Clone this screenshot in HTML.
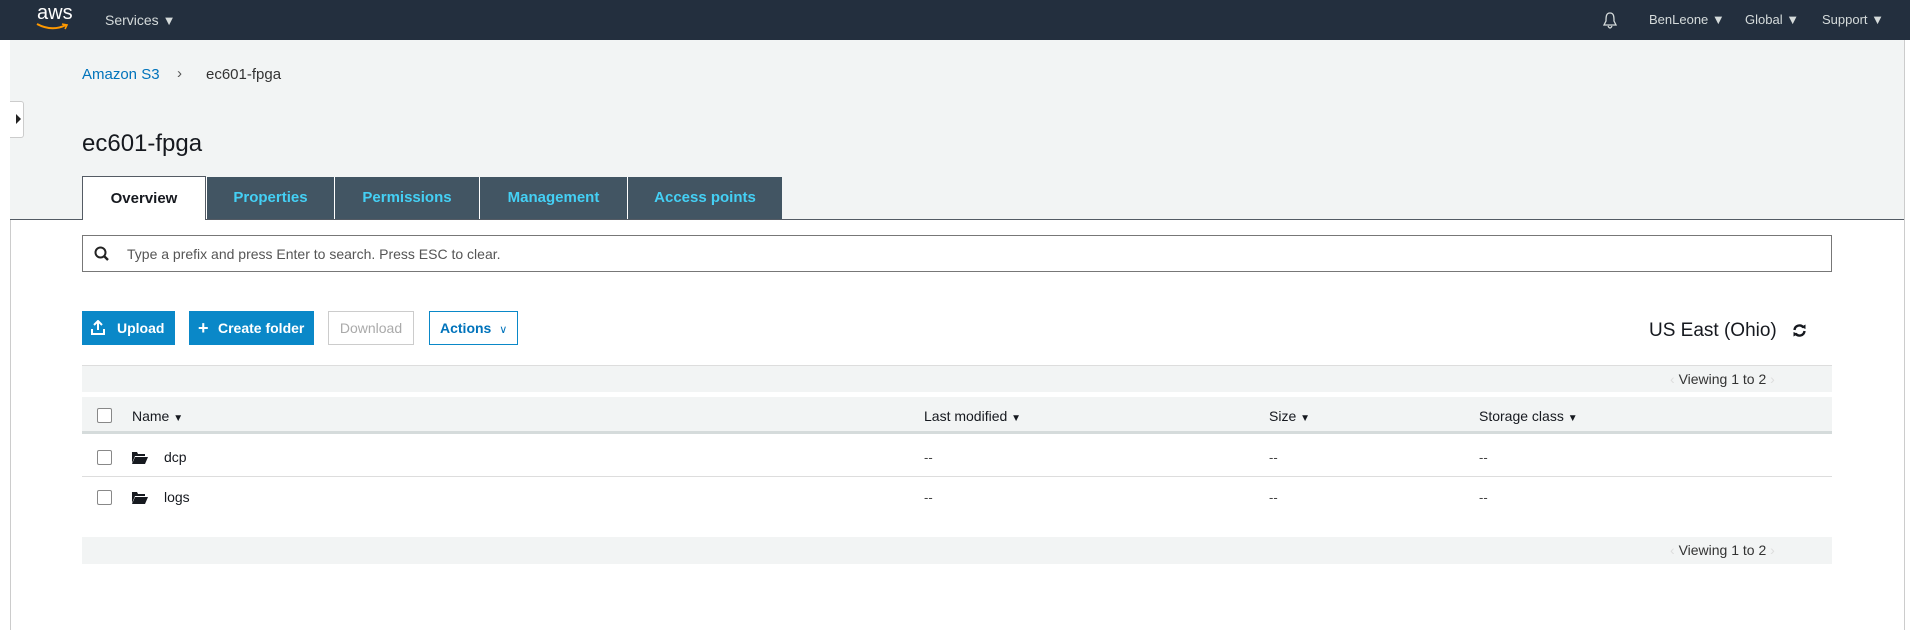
<!DOCTYPE html>
<html><head><style>
*{box-sizing:border-box;margin:0;padding:0}
body{width:1910px;height:630px;overflow:hidden;background:#fff;font-family:"Liberation Sans",Arial,sans-serif;color:#16191f;position:relative}
.a{position:absolute}
.nav{left:0;top:0;width:1910px;height:40px;background:#232f3e;color:#d5dbdb;font-size:14px}
.nav span{position:absolute;top:12px}
.gray{left:10px;top:40px;width:1894px;height:179px;background:#f2f4f4}
.tab{top:177px;height:42px;background:#425563;color:#44d0f5;font-weight:bold;font-size:15px;text-align:center;line-height:42px;border-left:1px solid #fff}
.btn{top:311px;height:34px;font-size:14px;font-weight:bold;line-height:34px}
.hd{font-size:14px;top:408px}
.cb{width:15px;height:15px;border:1px solid #888;background:#fff;border-radius:2px}
.dash{font-size:13px;color:#444}
.tri{font-size:10px}
</style></head><body>
<div class="a nav">
 <span style="left:37px;top:2px;font-size:20px;color:#fff;font-weight:normal">aws</span>
 <svg class="a" style="left:36px;top:23px" width="34" height="8"><path d="M1 1 Q16 9 30 2" stroke="#f90" stroke-width="2" fill="none"/><path d="M26 1 L31 2 L29 6" stroke="#f90" stroke-width="1.6" fill="none"/></svg>
 <span style="left:105px">Services <span style="position:static;font-size:13px">▼</span></span>
 <svg class="a" style="left:1602px;top:11px" width="16" height="19"><path d="M8 2 C4 2 4 6 4 10 L2 14 L14 14 L12 10 C12 6 12 2 8 2Z M6 15 Q8 19 10 15" stroke="#d5dbdb" stroke-width="1.3" fill="none"/></svg>
 <span style="left:1649px;font-size:13px">BenLeone ▼</span>
 <span style="left:1745px;font-size:13px">Global ▼</span>
 <span style="left:1822px;font-size:13px">Support ▼</span>
</div>
<div class="a" style="left:10px;top:40px;width:1px;height:590px;background:#ccc"></div>
<div class="a" style="left:1904px;top:40px;width:1px;height:590px;background:#ccc"></div>
<div class="a gray"></div>
<div class="a" style="left:10px;top:101px;width:14px;height:37px;background:#fff;border:1px solid #ccc;border-left:none;border-radius:0 3px 3px 0"></div>
<div class="a" style="left:16px;top:114px;width:0;height:0;border-left:5px solid #222;border-top:5px solid transparent;border-bottom:5px solid transparent"></div>
<div class="a" style="left:82px;top:66px;font-size:15px;color:#0073bb">Amazon S3</div>
<div class="a" style="left:177px;top:65px;font-size:15px;color:#555">›</div>
<div class="a" style="left:206px;top:66px;font-size:15px;color:#333">ec601-fpga</div>
<div class="a" style="left:82px;top:130px;font-size:24px;color:#16191f">ec601-fpga</div>
<div class="a" style="left:10px;top:219px;width:1894px;height:1px;background:#545b64"></div>
<div class="a" style="left:82px;top:176px;width:124px;height:44px;background:#fff;border:1px solid #545b64;border-bottom:none;font-size:15px;font-weight:bold;text-align:center;line-height:44px">Overview</div>
<div class="a tab" style="left:206px;width:128px">Properties</div>
<div class="a tab" style="left:334px;width:145px">Permissions</div>
<div class="a tab" style="left:479px;width:148px">Management</div>
<div class="a tab" style="left:627px;width:155px">Access points</div>
<div class="a" style="left:82px;top:235px;width:1750px;height:37px;border:1px solid #777"></div>
<svg class="a" style="left:94px;top:246px" width="16" height="16"><circle cx="6.5" cy="6.5" r="5" stroke="#222" stroke-width="2" fill="none"/><path d="M10 10 L14 14" stroke="#222" stroke-width="2.4"/></svg>
<div class="a" style="left:127px;top:246px;font-size:14px;color:#555">Type a prefix and press Enter to search. Press ESC to clear.</div>
<div class="a btn" style="left:82px;width:93px;background:#0a88c8;color:#fff"><svg style="position:absolute;left:9px;top:9px" width="14" height="15"><path d="M7 1 L7 10 M3 5 L7 1 L11 5" stroke="#fff" stroke-width="2" fill="none"/><path d="M1 9 L1 14 L13 14 L13 9" stroke="#fff" stroke-width="2" fill="none"/></svg><span style="position:absolute;left:35px">Upload</span></div>
<div class="a btn" style="left:189px;width:125px;background:#0a88c8;color:#fff"><span style="position:absolute;left:9px;font-size:18px">+</span><span style="position:absolute;left:29px">Create folder</span></div>
<div class="a btn" style="left:328px;width:86px;border:1px solid #ccc;color:#aaa;font-weight:normal;text-align:center;line-height:32px">Download</div>
<div class="a btn" style="left:429px;width:89px;border:1px solid #0a88c8;color:#0073bb;line-height:32px;padding-left:10px">Actions <span style="font-weight:normal;font-size:11px;margin-left:4px">∨</span></div>
<div class="a" style="left:1649px;top:320px;font-size:19px;color:#16191f">US East (Ohio)</div>
<svg class="a" style="left:1792px;top:323px" width="15" height="15"><path d="M2.5 7 A5 5 0 0 1 11.5 4.5" stroke="#16191f" stroke-width="2.4" fill="none"/><path d="M12.5 8 A5 5 0 0 1 3.5 10.5" stroke="#16191f" stroke-width="2.4" fill="none"/><path d="M9 4 L13.5 6 L13.5 1.5Z M6 11 L1.5 9 L1.5 13.5Z" fill="#16191f"/></svg>
<div class="a" style="left:82px;top:365px;width:1750px;height:27px;background:#f2f4f4;border-top:1px solid #ddd"></div>
<div class="a" style="left:1670px;top:371px;font-size:14px;color:#333"><span style="color:#ddd">‹ </span> Viewing 1 to 2 <span style="color:#ddd"> ›</span></div>
<div class="a" style="left:82px;top:397px;width:1750px;height:37px;background:#f2f4f4;border-bottom:3px solid #d5dbdb"></div>
<div class="a cb" style="left:97px;top:408px"></div>
<div class="a hd" style="left:132px">Name <span class="tri">▼</span></div>
<div class="a hd" style="left:924px">Last modified <span class="tri">▼</span></div>
<div class="a hd" style="left:1269px">Size <span class="tri">▼</span></div>
<div class="a hd" style="left:1479px">Storage class <span class="tri">▼</span></div>
<div class="a" style="left:82px;top:476px;width:1750px;height:1px;background:#ddd"></div>
<div class="a cb" style="left:97px;top:450px"></div>
<svg class="a" style="left:132px;top:451px" width="16" height="13"><path d="M0 1 L5 1 L6 3 L13 3 L13 5 L3 5 L0 12Z M3 6 L16 6 L13 13 L0 13Z" fill="#16191f"/></svg>
<div class="a" style="left:164px;top:449px;font-size:14px">dcp</div>
<div class="a dash" style="left:924px;top:450px">--</div><div class="a dash" style="left:1269px;top:450px">--</div><div class="a dash" style="left:1479px;top:450px">--</div>
<div class="a cb" style="left:97px;top:490px"></div>
<svg class="a" style="left:132px;top:491px" width="16" height="13"><path d="M0 1 L5 1 L6 3 L13 3 L13 5 L3 5 L0 12Z M3 6 L16 6 L13 13 L0 13Z" fill="#16191f"/></svg>
<div class="a" style="left:164px;top:489px;font-size:14px">logs</div>
<div class="a dash" style="left:924px;top:490px">--</div><div class="a dash" style="left:1269px;top:490px">--</div><div class="a dash" style="left:1479px;top:490px">--</div>
<div class="a" style="left:82px;top:537px;width:1750px;height:27px;background:#f2f4f4"></div>
<div class="a" style="left:1670px;top:542px;font-size:14px;color:#333"><span style="color:#ddd">‹ </span> Viewing 1 to 2 <span style="color:#ddd"> ›</span></div>
</body></html>
